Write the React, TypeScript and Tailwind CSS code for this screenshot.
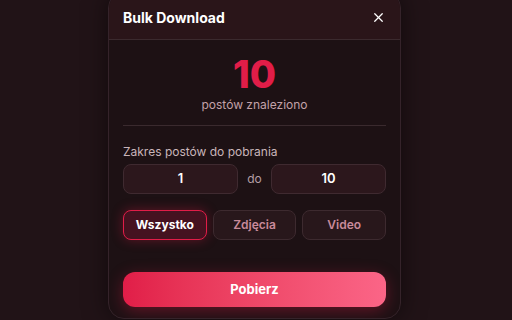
import { X } from "lucide-react";

export default function App() {
  return (
    <div
      className="flex h-[320px] w-[512px] overflow-hidden bg-[#211317]"
      style={{ fontFamily: "Inter, 'Noto Sans', sans-serif" }}
    >
      <div className="ml-[108px] mt-[-8px] flex h-[327px] w-[293px] flex-col overflow-hidden rounded-2xl border border-[#35232a] bg-[#1d1114] shadow-[0_0_24px_rgba(0,0,0,0.5)]">
        {/* Header */}
        <div className="flex h-[47px] shrink-0 items-center justify-between border-b border-[#3b2a2e] bg-[#2a1519] px-[14px] pt-[2px]">
          <h1 className="text-[14px] font-bold text-white">Bulk Download</h1>
          <X className="h-[15px] w-[15px] text-white" strokeWidth={2} />
        </div>

        <div className="flex flex-col px-[14px]">
          {/* Count */}
          <div className="flex flex-col items-center border-b border-[#3a2a2e] pb-[11px] pt-[12px]">
            <span className="text-[38px] font-extrabold leading-[44px] text-[#e11d48]">10</span>
            <span className="text-[12px] text-[#c3a1a9]">postów znaleziono</span>
          </div>

          {/* Range */}
          <div className="mt-[17px] text-[12px] text-[#c9b5ba]">Zakres postów do pobrania</div>
          <div className="mt-[3px] flex items-center gap-[8px]">
            <div className="flex h-[30px] flex-1 items-center justify-center rounded-lg border border-[#3f2a30] bg-[#2c171c] text-[13px] font-semibold text-white">
              1
            </div>
            <span className="w-[17px] text-center text-[12px] text-[#b59ea4]">do</span>
            <div className="flex h-[30px] flex-1 items-center justify-center rounded-lg border border-[#3f2a30] bg-[#2c171c] text-[13px] font-semibold text-white">
              10
            </div>
          </div>

          {/* Type */}
          <div className="mt-[16px] grid grid-cols-3 gap-[6px]">
            <button className="flex h-[30px] items-center justify-center rounded-lg border border-[#e11d48] bg-[#451220] text-[12px] font-bold text-white shadow-[0_0_12px_rgba(225,29,72,0.35)]">
              Wszystko
            </button>
            <button className="flex h-[30px] items-center justify-center rounded-lg border border-[#3d2a2f] bg-[#28171b] text-[12px] font-semibold text-[#c98a9a]">
              Zdjęcia
            </button>
            <button className="flex h-[30px] items-center justify-center rounded-lg border border-[#3d2a2f] bg-[#28171b] text-[12px] font-semibold text-[#c98a9a]">
              Video
            </button>
          </div>

          {/* Download */}
          <button className="mt-[32px] flex h-[35px] items-center justify-center rounded-xl bg-gradient-to-r from-[#e11d48] to-[#fb6587] text-[13px] font-bold text-white shadow-[0_4px_16px_rgba(225,29,72,0.35)]">
            Pobierz
          </button>
        </div>
      </div>
    </div>
  );
}
